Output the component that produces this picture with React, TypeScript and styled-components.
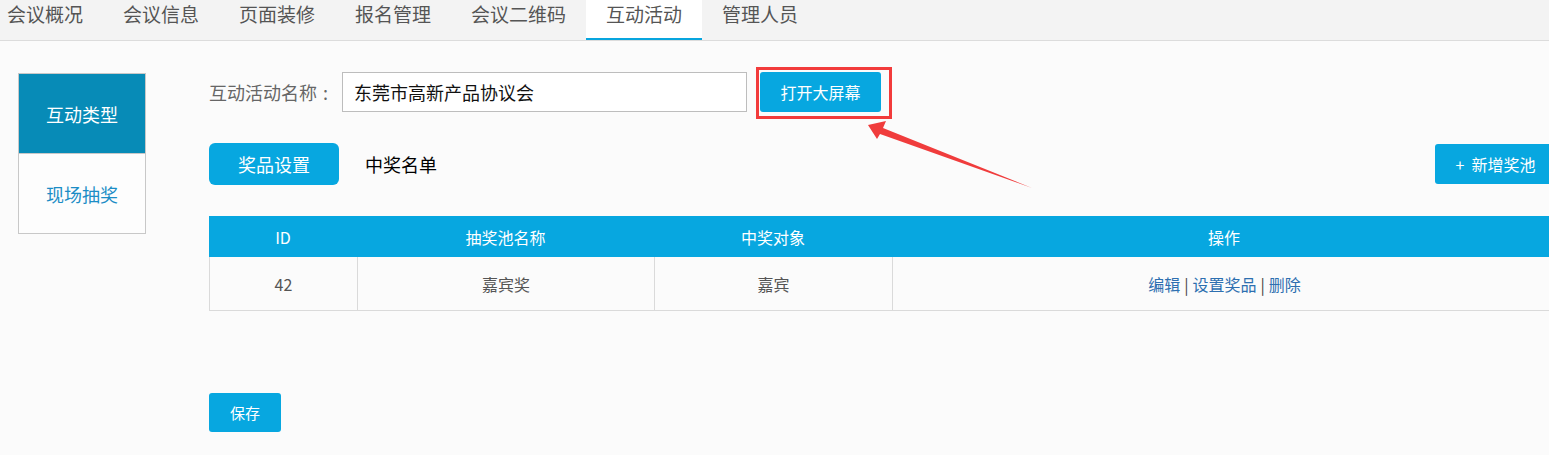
import React, { ReactElement } from 'react'
import styled, { createGlobalStyle } from 'styled-components';

const GlobalStyle = createGlobalStyle`
    html, body {
        margin : 0;
        padding : 0;
        overflow : hidden;
        background-color : #fbfbfb;
        font-family : "Noto Sans CJK SC", "Noto Sans", sans-serif;
    }
`;

const StyledPage = styled.div `
    position : relative;
    width : 1549px;
    height : 455px;
    overflow : hidden;
`;

const StyledNav = styled.div `
    display : flex;
    flex-direction : row;
    height : 40px;
    background-color : #f3f3f3;
    border-bottom : 1px solid #dcdcdc;
    margin-left : -13px;
`;

const StyledNavItem = styled.div<{ $active?: boolean }> `
    height : 38px;
    line-height : 28px;
    padding : 0 20px;
    font-size : 19px;
    color : #555;
    background-color : ${p => p.$active ? '#fff' : 'transparent'};
    border-bottom : 2px solid ${p => p.$active ? '#08a5de' : 'transparent'};
`;

const StyledBody = styled.div `
    display : flex;
    flex-direction : row;
    align-items : flex-start;
    padding : 31px 0 0 18px;
    gap : 63px;
`;

const StyledSide = styled.div `
    flex-shrink : 0;
    width : 126px;
    margin-top : 1px;
    border : 1px solid #c8c8c8;
    display : flex;
    flex-direction : column;
`;

const StyledSideItem = styled.div<{ $active?: boolean }> `
    height : 79px;
    display : flex;
    align-items : center;
    justify-content : center;
    font-size : 18px;
    color : ${p => p.$active ? '#fff' : '#1c8dc6'};
    background-color : ${p => p.$active ? '#078bb7' : '#fdfdfd'};
    & + & {
        border-top : 1px solid #c8c8c8;
    }
`;

const StyledMain = styled.div `
    flex-shrink : 0;
    width : 1347px;
    display : flex;
    flex-direction : column;
`;

const StyledNameRow = styled.div `
    display : flex;
    flex-direction : row;
    align-items : center;
    height : 40px;
`;

const StyledLabel = styled.span `
    font-size : 18px;
    color : #666;
    width : 133px;

    & > i {
        font-style : normal;
        margin-left : 6px;
    }
`;

const StyledInput = styled.div `
    box-sizing : border-box;
    width : 405px;
    height : 40px;
    border : 1px solid #bdbdbd;
    background-color : #fff;
    padding-left : 11px;
    line-height : 38px;
    font-size : 18px;
    color : #111;
`;

const StyledHighlight = styled.div `
    position : relative;
    margin-left : 13px;

    &::after {
        content : '';
        position : absolute;
        left : -4px;
        top : -5px;
        right : -11px;
        bottom : -7px;
        border : 3px solid #f23b3b;
        pointer-events : none;
    }
`;

const StyledButton = styled.div<{ $w: number; $h: number; $size?: number; $radius?: number }> `
    box-sizing : border-box;
    flex-shrink : 0;
    width : ${p => p.$w}px;
    height : ${p => p.$h}px;
    display : flex;
    align-items : center;
    justify-content : center;
    background-color : #07a7e0;
    color : #fff;
    font-size : ${p => p.$size || 16}px;
    border-radius : ${p => p.$radius || 3}px;
    white-space : pre;
`;

const StyledTabRow = styled.div `
    display : flex;
    flex-direction : row;
    align-items : center;
    margin-top : 31px;
`;

const StyledTabText = styled.div `
    padding-left : 26px;
    font-size : 18px;
    color : #000;
    flex : 1;
`;

const StyledTable = styled.div `
    margin-top : 31px;
    display : grid;
    grid-template-columns : 148px 297px 238px 1fr;
`;

const StyledHeadCell = styled.div `
    height : 41px;
    background-color : #07a7e0;
    color : #fff;
    font-size : 16px;
    display : flex;
    align-items : center;
    justify-content : center;
`;

const StyledCell = styled.div `
    height : 53px;
    border-bottom : 1px solid #dadada;
    border-left : 1px solid #dadada;
    color : #555;
    font-size : 16px;
    display : flex;
    align-items : center;
    justify-content : center;
`;

const StyledLink = styled.span `
    color : #2d6fb0;
`;

const StyledSep = styled.span `
    color : #444;
    margin : 0 4px;
`;

const StyledSave = styled.div `
    margin-top : 82px;
`;

const StyledArrow = styled.svg `
    position : absolute;
    left : 860px;
    top : 115px;
`;

const tabs = ['会议概况', '会议信息', '页面装修', '报名管理', '会议二维码', '互动活动', '管理人员'];

function App(): ReactElement {
    return (
        <StyledPage>
            <GlobalStyle />
            <StyledNav>
                {tabs.map(t => <StyledNavItem key={t} $active={t === '互动活动'}>{t}</StyledNavItem>)}
            </StyledNav>
            <StyledBody>
                <StyledSide>
                    <StyledSideItem $active>互动类型</StyledSideItem>
                    <StyledSideItem>现场抽奖</StyledSideItem>
                </StyledSide>
                <StyledMain>
                    <StyledNameRow>
                        <StyledLabel>互动活动名称<i>:</i></StyledLabel>
                        <StyledInput>东莞市高新产品协议会</StyledInput>
                        <StyledHighlight>
                            <StyledButton $w={121} $h={40}>打开大屏幕</StyledButton>
                        </StyledHighlight>
                    </StyledNameRow>
                    <StyledTabRow>
                        <StyledButton $w={130} $h={42} $size={18} $radius={6}>奖品设置</StyledButton>
                        <StyledTabText>中奖名单</StyledTabText>
                        <StyledButton $w={121} $h={40} $size={16}>{'+  新增奖池'}</StyledButton>
                    </StyledTabRow>
                    <StyledTable>
                        <StyledHeadCell>ID</StyledHeadCell>
                        <StyledHeadCell>抽奖池名称</StyledHeadCell>
                        <StyledHeadCell>中奖对象</StyledHeadCell>
                        <StyledHeadCell>操作</StyledHeadCell>
                        <StyledCell>42</StyledCell>
                        <StyledCell>嘉宾奖</StyledCell>
                        <StyledCell>嘉宾</StyledCell>
                        <StyledCell>
                            <StyledLink>编辑</StyledLink><StyledSep>|</StyledSep>
                            <StyledLink>设置奖品</StyledLink><StyledSep>|</StyledSep>
                            <StyledLink>删除</StyledLink>
                        </StyledCell>
                    </StyledTable>
                    <StyledSave>
                        <StyledButton $w={72} $h={39} $size={15}>保存</StyledButton>
                    </StyledSave>
                </StyledMain>
            </StyledBody>
            <StyledArrow width="180" height="80" viewBox="0 0 180 80">
                <polygon points="8,10 26,6 23,13 172,73 20,19 17,24" fill="#f03c3c" />
            </StyledArrow>
        </StyledPage>
    )
}

export default App
